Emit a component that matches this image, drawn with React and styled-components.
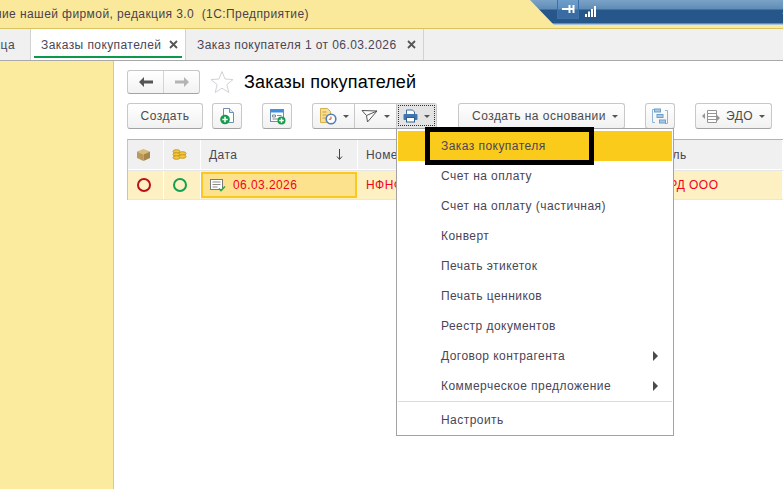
import React from 'react';
import styled, { createGlobalStyle } from 'styled-components';

const GlobalStyle = createGlobalStyle`
  html, body {
    margin: 0;
    padding: 0;
    height: 100%;
    overflow: hidden;
    background: #fff;
  }
  #root {
    height: 100%;
  }
`;

const Page = styled.div`
  width: 783px;
  height: 489px;
  display: flex;
  flex-direction: column;
  overflow: hidden;
  font-family: "Liberation Sans", Arial, sans-serif;
  font-size: 12px;
  color: #4a4556;
`;

const TitleBar = styled.div`
  height: 28px;
  flex: none;
  display: flex;
  background: #fbe99b;
  border-bottom: 1px solid #d9c35f;
`;

const AppName = styled.div`
  width: 309px;
  flex: none;
  display: flex;
  justify-content: flex-end;
  align-items: center;
  height: 27px;
  overflow: hidden;
  white-space: pre;
  letter-spacing: 0.42px;
  color: #4c3f4e;
`;

const TitleSpacer = styled.div`
  flex: 1;
`;

const BlueBar = styled.div`
  width: 253px;
  height: 25px;
  flex: none;
  display: flex;
  align-items: flex-start;
  padding-left: 27px;
  box-sizing: border-box;
  gap: 6px;
  background: linear-gradient(#7ba3c8 0, #5f8cb5 9px, #27578a 10px, #27578a 23px, #a9c3da 24px);
  clip-path: polygon(0 0, 100% 0, 100% 100%, 24px 100%);
  color: #fff;
`;

const StatusIcon = styled.div`
  width: 22px;
  height: 19px;
  display: flex;
  align-items: center;
  justify-content: center;
  box-sizing: border-box;
  background: rgba(90, 150, 210, 0.35);
  border: 1px solid #3d70a6;
  border-top: none;
`;

const SignalIcon = styled.div`
  height: 15px;
  padding-top: 4px;
  display: flex;
  align-items: center;
`;

const TrailingDigit = styled.span`
  margin-left: auto;
  margin-right: -6px;
  padding-top: 3px;
  font-size: 12px;
  color: #fff;
`;

const TabBar = styled.div`
  height: 31px;
  flex: none;
  display: flex;
  background: #f0f0f0;
  border-bottom: 1px solid #a9a9a9;
`;

const ClippedTab = styled.div`
  width: 31px;
  flex: none;
  display: flex;
  justify-content: flex-end;
  align-items: center;
  overflow: hidden;
  white-space: nowrap;
  padding-right: 15px;
  box-sizing: border-box;
  letter-spacing: 0.42px;
  border-right: 1px solid #d2d2d2;
`;

const Tab = styled.div`
  position: relative;
  flex: none;
  width: ${(p) => p.$width}px;
  box-sizing: border-box;
  display: flex;
  align-items: center;
  justify-content: space-between;
  padding: 0 7px 0 ${(p) => (p.$active ? 10 : 11)}px;
  white-space: nowrap;
  letter-spacing: 0.42px;
  background: ${(p) => (p.$active ? '#fff' : 'transparent')};
  border-right: 1px solid #d2d2d2;
  &::after {
    content: '';
    display: ${(p) => (p.$active ? 'block' : 'none')};
    position: absolute;
    left: 3px;
    right: 3px;
    bottom: 2px;
    height: 2px;
    background: #0b9a4a;
  }
`;

const CloseMark = styled.svg`
  width: 9px;
  height: 9px;
  flex: none;
`;

const Body = styled.div`
  flex: 1;
  display: flex;
  min-height: 0;
`;

const SidePanel = styled.div`
  width: 113px;
  flex: none;
  background: #fbeb9f;
  border-right: 1px solid #dccb7c;
`;

const Content = styled.div`
  flex: 1;
  min-width: 0;
  padding: 8px 0 0 13px;
  overflow: hidden;
  background: #fff;
`;

const Header = styled.div`
  display: flex;
  align-items: center;
  height: 26px;
`;

const NavGroup = styled.div`
  width: 73px;
  height: 24px;
  display: flex;
  box-sizing: border-box;
  background: linear-gradient(#fff, #f2f2f2);
  border: 1px solid #c8c8c8;
  border-bottom-color: #a3a3a3;
  border-radius: 3px;
`;

const NavButton = styled.div`
  flex: 1;
  display: flex;
  align-items: center;
  justify-content: center;
  & + & {
    border-left: 1px solid #d4d4d4;
  }
`;

const Star = styled.svg`
  width: 24px;
  height: 24px;
  margin-left: 10px;
`;

const Title = styled.h1`
  margin: 0 0 0 10px;
  font-size: 18px;
  font-weight: normal;
  color: #000;
  letter-spacing: 0.16px;
`;

const Toolbar = styled.div`
  display: flex;
  height: 26px;
  margin-top: 8px;
`;

const Button = styled.div`
  height: 26px;
  width: ${(p) => p.$width}px;
  margin-left: ${(p) => p.$gap || 0}px;
  padding-left: ${(p) => p.$inset || 0}px;
  flex: none;
  box-sizing: border-box;
  display: flex;
  align-items: center;
  justify-content: center;
  gap: 6px;
  white-space: nowrap;
  letter-spacing: 0.47px;
  color: #4b4b4b;
  background: linear-gradient(#fff, #f1f1f1);
  border: 1px solid #c8c8c8;
  border-bottom-color: #a3a3a3;
  border-radius: 3px;
`;

const ButtonGroup = styled.div`
  height: 26px;
  width: 125px;
  margin-left: 20px;
  flex: none;
  box-sizing: border-box;
  display: flex;
  background: linear-gradient(#fff, #f1f1f1);
  border: 1px solid #c8c8c8;
  border-bottom-color: #a3a3a3;
  border-radius: 3px;
`;

const GroupItem = styled.div`
  position: relative;
  width: ${(p) => p.$width}px;
  flex: none;
  box-sizing: border-box;
  display: flex;
  align-items: center;
  justify-content: center;
  gap: 6px;
  border-right: ${(p) => (p.$last ? 'none' : '1px solid #c8c8c8')};
  background: ${(p) => (p.$open ? '#e4e4e4' : 'transparent')};
`;

const FocusRing = styled.div`
  position: absolute;
  inset: 1px 1px 2px 1px;
  border: 1px dotted #333;
  pointer-events: none;
`;

const Caret = styled.span`
  width: 0;
  height: 0;
  flex: none;
  border-left: 3px solid transparent;
  border-right: 3px solid transparent;
  border-top: 3px solid #555;
`;

const Grid = styled.div`
  margin-top: 10px;
  border-top: 1px solid #b4b4b4;
  border-left: 1px solid #c4c4c4;
`;

const Row = styled.div`
  display: grid;
  grid-template-columns: 36px 37px 157px 252px 1fr;
  height: ${(p) => p.$height}px;
  background: ${(p) => p.$bg};
  border-bottom: 1px solid #e6e6e6;
`;

const HeadCell = styled.div`
  display: flex;
  align-items: center;
  justify-content: ${(p) => (p.$center ? 'center' : 'space-between')};
  padding: ${(p) => (p.$center ? `0 ${p.$trail}px 0 0` : '0 14px 0 8px')};
  background: #f0f0f0;
  border-right: 1px solid #fff;
  border-bottom: 1px solid #fff;
  overflow: hidden;
  white-space: nowrap;
  letter-spacing: 0.42px;
`;

const Cell = styled.div`
  display: flex;
  align-items: center;
  justify-content: ${(p) => (p.$center ? 'center' : 'flex-start')};
  gap: 7px;
  padding: ${(p) => (p.$center ? `0 ${p.$trail}px 0 0` : '0 8px')};
  box-sizing: border-box;
  overflow: hidden;
  white-space: nowrap;
  letter-spacing: 0.42px;
  color: #f5001c;
  border-right: 1px solid #fff;
`;

const SelectedCell = styled(Cell)`
  height: 26px;
  margin: 1px 1px 0 0;
  padding: 0 7px 0 7px;
  background: #fde28e;
  border: 2px solid #fac81e;
`;

const Ring = styled.span`
  width: 14px;
  height: 14px;
  box-sizing: border-box;
  border-radius: 50%;
  border: 2px solid ${(p) => p.$color};
`;

const Menu = styled.div`
  position: absolute;
  z-index: 5;
  top: 100%;
  left: -1px;
  width: 278px;
  height: 308px;
  box-sizing: border-box;
  padding: 2px 1px 1px;
  background: #fff;
  border: 1px solid #a3a3a3;
  letter-spacing: 0.45px;
`;

const MenuItem = styled.div`
  position: relative;
  height: 30px;
  box-sizing: border-box;
  display: flex;
  align-items: center;
  justify-content: space-between;
  padding: 0 14px 0 43px;
  white-space: nowrap;
  background: ${(p) => (p.$active ? '#fbcb1c' : 'transparent')};
`;

const Highlight = styled.div`
  position: absolute;
  left: 27px;
  top: -4px;
  width: 169px;
  height: 38px;
  box-sizing: border-box;
  border: 5px solid #000;
  pointer-events: none;
`;

const SubArrow = styled.span`
  width: 0;
  height: 0;
  border-top: 5px solid transparent;
  border-bottom: 5px solid transparent;
  border-left: 5px solid #4a4a4a;
`;

const MenuSeparator = styled.div`
  height: 1px;
  margin: 0 0 3px;
  background: #e0dcc8;
`;

const NewDocIcon = () => (
  <svg width="17" height="18" viewBox="0 0 17 18">
    <path d="M4.500 1.500h6l4 4v10h-10z" fill="#fff" stroke="#6f8fb0" />
    <path d="M10.500 1.500v4h4" fill="#dfe8f2" stroke="#6f8fb0" />
    <circle cx="6" cy="12.500" r="4.800" fill="#169a4c" />
    <path d="M6 9.800v5.400M3.300 12.500h5.400" stroke="#fff" strokeWidth="1.500" />
  </svg>
);

const NewFormIcon = () => (
  <svg width="17" height="17" viewBox="0 0 17 17">
    <rect x="1.500" y="1.500" width="13" height="12" fill="#fff" stroke="#6f8fb0" />
    <rect x="1.500" y="1.500" width="13" height="3" fill="#3f8fe0" />
    <path d="M3.500 7h3v2h-3zM8 7.500h4.500M3.500 11h6" stroke="#7f8a96" fill="none" />
    <circle cx="12.500" cy="12.500" r="4" fill="#169a4c" />
    <path d="M12.500 10.200v4.600M10.200 12.500h4.600" stroke="#fff" strokeWidth="1.400" />
  </svg>
);

const ReportIcon = () => (
  <svg width="18" height="18" viewBox="0 0 18 18">
    <path d="M1.500 1.500h7l3 3v11h-10z" fill="#f6de93" stroke="#d6b04f" />
    <path d="M3.500 5h4M3.500 8h4M3.500 11h3" stroke="#c9a23f" />
    <circle cx="12" cy="12" r="4.800" fill="#fff" stroke="#4f7fb5" strokeWidth="1.600" />
    <path d="M12 9.500v2.700h-2.200" stroke="#d04a3a" fill="none" />
  </svg>
);

const SendIcon = () => (
  <svg width="17" height="14" viewBox="0 0 17 14">
    <path d="M1 1.500l15 0.500-9.500 11-1-6.500zM5.500 6.500L16 2" fill="#fff" stroke="#555" strokeLinejoin="round" />
  </svg>
);

const PrintIcon = () => (
  <svg width="15" height="14" viewBox="0 0 15 14">
    <path d="M3.500 1h6l2 2v3h-8z" fill="#fff" stroke="#3f6f9f" />
    <rect x="0.500" y="5" width="14" height="6" rx="1" fill="#3f76ad" />
    <rect x="3.500" y="8.500" width="8" height="4.500" fill="#fff" stroke="#2f5f8f" />
  </svg>
);

const StructureIcon = () => (
  <svg width="16" height="17" viewBox="0 0 16 17">
    <path d="M3 1.500H.5v13H3M13 2.500h2.500v13H13" stroke="#8fb4d4" fill="none" />
    <rect x="2.500" y="1" width="6" height="3" fill="#a9c8e2" stroke="#6f9fc8" />
    <rect x="5" y="6.500" width="6" height="3" fill="#a9c8e2" stroke="#6f9fc8" />
    <rect x="7.500" y="12" width="6" height="3" fill="#a9c8e2" stroke="#6f9fc8" />
  </svg>
);

const ExchangeIcon = () => (
  <svg width="18" height="15" viewBox="0 0 18 15">
    <path d="M5.500 1.500h9v12h-9zM5.500 4.500h9M5.500 7.500h9M5.500 10.500h9" stroke="#949494" fill="#fff" />
    <path d="M0 7l3-3v6zM18 9l-3-3v6z" fill="#949494" />
  </svg>
);

const BoxIcon = () => (
  <svg width="15" height="14" viewBox="0 0 15 14">
    <path d="M7.500 1l6.500 2.500-6.500 3-6.500-3z" fill="#d8bc7c" />
    <path d="M1 3.500l6.500 3V13L1 10z" fill="#b99a5a" />
    <path d="M14 3.500l-6.500 3V13l6.500-3z" fill="#a58548" />
  </svg>
);

const CoinsIcon = () => (
  <svg width="15" height="12" viewBox="0 0 15 12">
    <g fill="#f4c63c" stroke="#c99a1e">
      <ellipse cx="4.500" cy="2.500" rx="3.500" ry="1.800" />
      <ellipse cx="4.500" cy="5.500" rx="3.500" ry="1.800" />
      <ellipse cx="4.500" cy="8.500" rx="3.500" ry="1.800" />
      <ellipse cx="10.500" cy="4.500" rx="3.500" ry="1.800" />
      <ellipse cx="10.500" cy="7.500" rx="3.500" ry="1.800" />
    </g>
  </svg>
);

const PostedIcon = () => (
  <svg width="16" height="13" viewBox="0 0 16 13">
    <rect x="0.500" y="0.500" width="12" height="10" fill="#fff" stroke="#7a7a7a" />
    <path d="M2.500 3h8M2.500 5.500h8M2.500 8h5" stroke="#8a8a8a" />
    <path d="M9 9.500l2 2 4-4" stroke="#2ca84a" strokeWidth="1.600" fill="none" />
  </svg>
);

const menuItems = [
  'Заказ покупателя',
  'Счет на оплату',
  'Счет на оплату (частичная)',
  'Конверт',
  'Печать этикеток',
  'Печать ценников',
  'Реестр документов',
  'Договор контрагента',
  'Коммерческое предложение',
];

const App = () => (
  <Page>
    <GlobalStyle />
    <TitleBar>
      <AppName>Управление нашей фирмой, редакция 3.0  (1С:Предприятие)</AppName>
      <TitleSpacer />
      <BlueBar>
        <StatusIcon>
          <svg width="13" height="8" viewBox="0 0 13 8">
            <path d="M0 4h12.500M7.500 0v8M11.500 0v8" stroke="#fff" strokeWidth="2" />
          </svg>
        </StatusIcon>
        <SignalIcon>
          <svg width="12" height="11" viewBox="0 0 12 11">
            <path d="M0 8h2v3H0zM3 5.500h2V11H3zM6 3h2v8H6zM9 0h2v11H9z" fill="#fff" />
          </svg>
        </SignalIcon>
        <TrailingDigit>2</TrailingDigit>
      </BlueBar>
    </TitleBar>
    <TabBar>
      <ClippedTab>страница</ClippedTab>
      <Tab $active $width={155}>
        Заказы покупателей
        <CloseMark viewBox="0 0 9 9">
          <path d="M1 1l7 7M8 1L1 8" stroke="#555" strokeWidth="1.800" />
        </CloseMark>
      </Tab>
      <Tab $width={238}>
        Заказ покупателя 1 от 06.03.2026
        <CloseMark viewBox="0 0 9 9">
          <path d="M1 1l7 7M8 1L1 8" stroke="#555" strokeWidth="1.800" />
        </CloseMark>
      </Tab>
    </TabBar>
    <Body>
      <SidePanel />
      <Content>
        <Header>
          <NavGroup>
            <NavButton>
              <svg width="14" height="10" viewBox="0 0 14 10">
                <path d="M0 5l5-5v3.500h9v3H5V10z" fill="#555" />
              </svg>
            </NavButton>
            <NavButton>
              <svg width="14" height="10" viewBox="0 0 14 10">
                <path d="M14 5L9 0v3.500H0v3h9V10z" fill="#b4b4b4" />
              </svg>
            </NavButton>
          </NavGroup>
          <Star viewBox="0 0 24 24">
            <path d="M12 1.500l3 7.500 8 .6-6.200 5 2 7.900L12 18.200 5.200 22.500l2-7.900L1 9.600l8-.6z" fill="#fff" stroke="#cfd3d8" />
          </Star>
          <Title>Заказы покупателей</Title>
        </Header>
        <Toolbar>
          <Button $width={76}>Создать</Button>
          <Button $width={30} $gap={9}>
            <NewDocIcon />
          </Button>
          <Button $width={30} $gap={20}>
            <NewFormIcon />
          </Button>
          <ButtonGroup>
            <GroupItem $width={42}>
              <ReportIcon />
              <Caret />
            </GroupItem>
            <GroupItem $width={42}>
              <SendIcon />
              <Caret />
            </GroupItem>
            <GroupItem $width={39} $open $last>
              <FocusRing />
              <PrintIcon />
              <Caret />
              <Menu>
                {menuItems.slice(0, 1).map((label) => (
                  <MenuItem key={label} $active>
                    {label}
                    <Highlight />
                  </MenuItem>
                ))}
                {menuItems.slice(1).map((label) => (
                  <MenuItem key={label}>
                    {label}
                    {(label === 'Договор контрагента' || label === 'Коммерческое предложение') && <SubArrow />}
                  </MenuItem>
                ))}
                <MenuSeparator />
                <MenuItem>Настроить</MenuItem>
              </Menu>
            </GroupItem>
          </ButtonGroup>
          <Button $width={167} $gap={21} $inset={7}>
            Создать на основании
            <Caret />
          </Button>
          <Button $width={30} $gap={20}>
            <StructureIcon />
          </Button>
          <Button $width={77} $gap={20}>
            <ExchangeIcon />
            ЭДО
            <Caret />
          </Button>
        </Toolbar>
        <Grid>
          <Row $height={30} $bg="#fff">
            <HeadCell $center $trail={4}>
              <BoxIcon />
            </HeadCell>
            <HeadCell $center $trail={5}>
              <CoinsIcon />
            </HeadCell>
            <HeadCell>
              Дата
              <svg width="7" height="11" viewBox="0 0 7 11">
                <path d="M3.500 0v10M1 7.500l2.500 3 2.500-3" stroke="#444" fill="none" />
              </svg>
            </HeadCell>
            <HeadCell>Номер</HeadCell>
            <HeadCell>Покупатель</HeadCell>
          </Row>
          <Row $height={28} $bg="#fdf1c4">
            <Cell $center $trail={4}>
              <Ring $color="#b9121b" />
            </Cell>
            <Cell $center $trail={5}>
              <Ring $color="#12a150" />
            </Cell>
            <SelectedCell>
              <PostedIcon />
              06.03.2026
            </SelectedCell>
            <Cell>НФНФ-000001</Cell>
            <Cell>Лидер-ОРД ООО</Cell>
          </Row>
        </Grid>
      </Content>
    </Body>
  </Page>
);

export default App;
